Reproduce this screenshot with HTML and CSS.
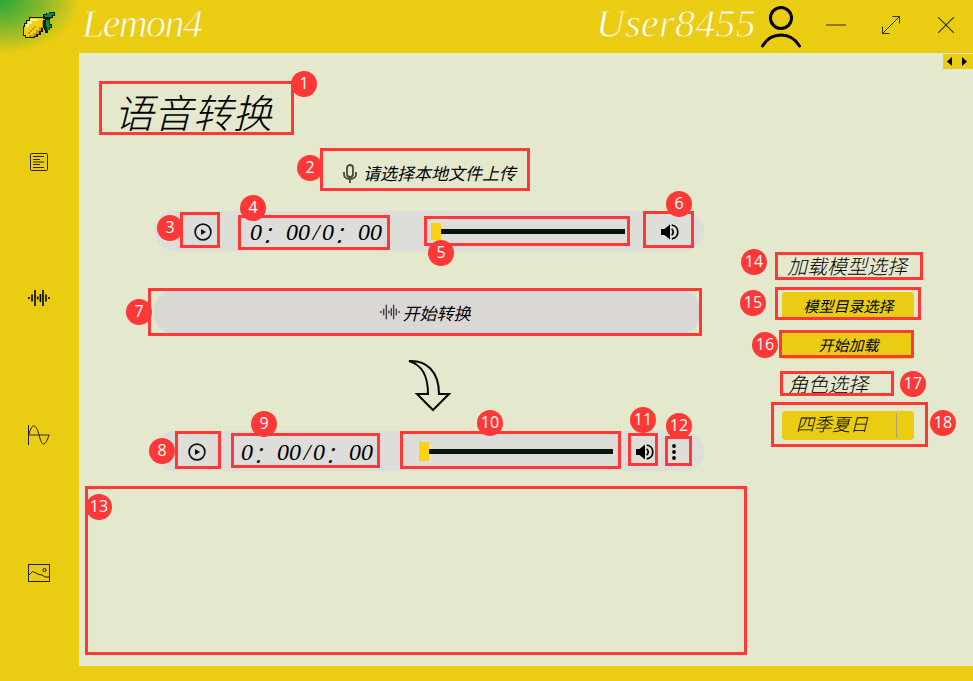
FILE: index.html
```html
<!DOCTYPE html>
<html lang="zh-CN">
<head>
<meta charset="utf-8">
<title>Lemon4</title>
<link rel="stylesheet" href="styles.css">
</head>
<body>
<svg class="defs" width="0" height="0">
  <defs>
    <symbol id="wave" viewBox="0 0 22 16"><path d="M1 7v2M4 4.500v7M7 0v16M9.700 6.500v3M12.400 4v8M15 0v16M18 4.500v7M21 7v2" fill="none" stroke="currentColor" stroke-width="1.600"/></symbol>
    <symbol id="play" viewBox="0 0 18 18"><circle cx="9" cy="9" r="7.900" fill="none" stroke="#111" stroke-width="1.700"/><path d="M7 6l5.200 3L7 12z" fill="#111"/></symbol>
    <symbol id="volume" viewBox="0 0 18 16"><path d="M0 5h3.500L9 .5v15L3.500 11H0z" fill="#000"/><path d="M10.700 4.700q3 3.300 0 6.600M10.800 1.200c8 1 8 12.600 0 13.600" fill="none" stroke="#000" stroke-width="1.700"/></symbol>
  </defs>
</svg>
<div class="app">
  <header class="topbar">
    <svg class="lemon" width="32" height="27" viewBox="0 0 32 27" shape-rendering="crispEdges">
      <path d="M6 5h14v3h2v8h-2v4h-2v3h-3v2h-3v1H2v-2H0V14h1v-3h2V8h3z" fill="#17180c"/>
      <path d="M7 6h13v10h-2v3h-2v3h-3v2h-2v1H3v-2H1v-8h1v-3h2V9h3z" fill="#f4cf18"/>
      <path d="M7 7h8v2H9v3H6v3H3v-3h2V9h2z" fill="#fff27a"/>
      <path d="M19 9h1v7h-2v3h-2v3h-3v2h-2v1H6v-2h4v-2h3v-3h3v-3h3zM5 20h2v-2h2v-2h2v-2h2v2h-2v2H9v2H7v2H5z" fill="#c79a0c"/>
      <path d="M5 12h1v1H5zM7 10h1v1H7zM10 8h2v1h-2z" fill="#fff"/>
      <path d="M20 2h3V1h3V0h6v4h-2v2h-2v1h-1v5h2v4h-2v2h-2v3h-3v-3h-1v-6h1V7h-2z" fill="#0a2410"/>
      <path d="M21 3h3V1h7v2h-2v2h-7zM23 8h3v5h2v2h-2v3h-2v-3h-1z" fill="#118a38"/>
    </svg>
    <div class="brand">Lemon4</div>
    <div class="user">User8455</div>
    <svg class="avatar" width="42" height="42" viewBox="0 0 42 42" fill="none" stroke="#000" stroke-linecap="round"><circle cx="21" cy="12" r="10.500" stroke-width="3"/><path d="M2.500 40Q9 29 21 29T39.500 40" stroke-width="3"/></svg>
    <svg class="win-min" width="20" height="20" viewBox="0 0 20 20"><path d="M0 10h20" stroke="#8c790b" stroke-width="2"/></svg>
    <svg class="win-max" width="18" height="18" viewBox="0 0 18 18" fill="none" stroke="#33310a"><path d="M.5 17.500l17-17M10.500.5h7v7M.5 10.500v7h7"/></svg>
    <svg width="16" height="16" viewBox="0 0 16 16" stroke="#33310a" stroke-width="1.100"><path d="M0 0l16 16M16 0L0 16"/></svg>
  </header>
  <nav class="sidebar">
    <svg width="18" height="18" viewBox="0 0 18 18" fill="none" stroke="#29270a"><rect x=".5" y=".5" width="17" height="17" rx="1"/><path d="M3 3.500h11M3 6.500h7M3 9h11M3 11.500h7M3 14.500h11"/></svg>
    <svg width="22" height="16"><use href="#wave"/></svg>
    <svg width="22" height="20" viewBox="0 0 22 20" fill="none" stroke="#222009"><path d="M.5 0v20"/><path d="M1 10h20.500" stroke="#74650a" stroke-width="1.500"/><path d="M1 9C4-2 8-2 11 10S17 22 21 10"/></svg>
    <svg width="22" height="18" viewBox="0 0 22 18" fill="none" stroke="#222009"><rect x=".5" y=".5" width="21" height="17"/><path d="M1 11l3.500-3.500L8 9l3 1.500 3 .5 3 2h4.500"/><circle cx="16.500" cy="6" r="1.600"/></svg>
  </nav>
  <main class="content">
    <section class="work">
      <h1>语音转换</h1>
      <div class="upload">
        <svg width="14" height="20" viewBox="0 0 14 20" fill="none" stroke="#454739" stroke-width="1.800"><rect x="4" y="1" width="6" height="12" rx="3"/><path d="M1 8v2.500c0 6 12 6 12 0V8M7 15v4"/></svg>
        <span>请选择本地文件上传</span>
      </div>
      <div class="player player-source">
        <svg width="18" height="18"><use href="#play"/></svg>
        <span class="time">0<em>：</em>00<i>/</i>0<em>：</em>00</span>
        <div class="slider"><b></b></div>
        <svg width="18" height="16"><use href="#volume"/></svg>
      </div>
      <div class="convert"><svg width="20" height="16"><use href="#wave"/></svg><span>开始转换</span></div>
      <svg class="arrow" width="44" height="54" viewBox="0 0 44 54"><path d="M2 2C19 1 32 12 32 35h10L26 51 10 35h11C21 16 15 6 2 2z" fill="none" stroke="#050805" stroke-width="2"/></svg>
      <div class="player player-result">
        <svg width="18" height="18"><use href="#play"/></svg>
        <span class="time">0<em>：</em>00<i>/</i>0<em>：</em>00</span>
        <div class="slider"><b></b></div>
        <svg width="18" height="16"><use href="#volume"/></svg>
        <svg class="more" width="4" height="16" viewBox="0 0 4 16"><circle cx="2" cy="2" r="1.900"/><circle cx="2" cy="8" r="1.900"/><circle cx="2" cy="14" r="1.900"/></svg>
      </div>
    </section>
    <aside class="model">
      <div class="pager"><svg width="20" height="9" viewBox="0 0 20 9"><path d="M5 0v9L0 4.500zM15 0v9l5-4.500z"/></svg></div>
      <div class="label">加载模型选择</div>
      <div class="button pick">模型目录选择</div>
      <div class="button load">开始加载</div>
      <div class="label role">角色选择</div>
      <div class="combo">四季夏日</div>
    </aside>
  </main>
</div>
<div class="marks">
  <div class="box b1"></div><div class="box b2"></div><div class="box b3"></div><div class="box b4"></div><div class="box b5"></div><div class="box b6"></div>
  <div class="box b7"></div><div class="box b8"></div><div class="box b9"></div><div class="box b10"></div><div class="box b11"></div><div class="box b12"></div>
  <div class="box b13"></div><div class="box b14"></div><div class="box b15"></div><div class="box b16"></div><div class="box b17"></div><div class="box b18"></div>
  <span class="num n1">1</span><span class="num n2">2</span><span class="num n3">3</span><span class="num n4">4</span><span class="num n5">5</span><span class="num n6">6</span>
  <span class="num n7">7</span><span class="num n8">8</span><span class="num n9">9</span><span class="num n10">10</span><span class="num n11">11</span><span class="num n12">12</span>
  <span class="num n13">13</span><span class="num n14">14</span><span class="num n15">15</span><span class="num n16">16</span><span class="num n17">17</span><span class="num n18">18</span>
</div>
</body>
</html>
```
FILE: styles.css
```css
* { box-sizing: border-box; }
body {
  margin: 0;
  width: 973px;
  height: 681px;
  position: relative;
  overflow: hidden;
  color: #000;
  font-family: "Liberation Serif", "Noto Sans CJK SC", serif;
  font-style: italic;
  font-weight: 300;
}
svg { display: block; flex: none; }
.defs { position: absolute; }
.app {
  height: 681px;
  display: grid;
  grid-template: 53px 1fr 15px / 79px 1fr;
  background: radial-gradient(ellipse 80px 54px at 0 0, #2ba63d, #7fb82c 50%, #eacc12) no-repeat 0 0 / 80px 54px, #eacc12;
}
.topbar {
  grid-column: 1 / 3;
  display: flex;
  align-items: center;
  padding: 0 19px 3px 23px;
}
.brand, .user {
  color: #fff;
  font-size: 40px;
  line-height: 46px;
  white-space: nowrap;
  margin-top: -3px;
  -webkit-text-stroke: 0.8px #eacc12;
}
.brand { width: 120px; margin-left: 27px; letter-spacing: -1.6px; }
.user { width: 160px; margin-left: 394px; letter-spacing: 0.3px; }
.avatar { margin: 3px 24px 0 4px; }
.win-min { margin-right: 36px; }
.win-max { margin-right: 38px; }
.sidebar {
  display: flex;
  flex-direction: column;
  align-items: center;
  justify-content: space-between;
  padding: 100px 1px 84px 0;
}
.content { display: flex; background: #e4e8cd; min-width: 0; }
.work { width: 680px; }
h1 {
  margin: 32px 0 0 35px;
  font-size: 39.5px;
  line-height: 60px;
  height: 63px;
  font-weight: 300;
}
.upload {
  display: flex;
  align-items: center;
  gap: 6px;
  height: 26px;
  margin: 13px 0 0 264px;
  padding-top: 2px;
  font-size: 17px;
  line-height: 24px;
}
.upload svg { margin-top: -3px; }
.player {
  display: flex;
  align-items: center;
  width: 549px;
  height: 40px;
  margin-left: 76px;
  border-radius: 20px;
  background: #dddeda;
}
.player > svg { margin-top: 1px; }
.time { font-size: 24px; line-height: 40px; width: 134px; white-space: nowrap; padding-top: 1px; }
.time i { display: inline-block; width: 12px; text-align: center; line-height: 1; }
.time em { display: inline-block; line-height: 1; transform: translate(-1px, 3px); }
.slider {
  height: 5px;
  background: #04150a;
  display: flex;
  align-items: center;
}
.slider b { width: 10px; height: 17px; background: #fbd20f; }
.player-source { margin-top: 24px; padding-left: 39px; }
.player-source .time { margin-left: 38px; }
.player-source .slider { width: 194px; margin: 0 36px 0 47px; }
.player-result { padding-left: 33px; }
.player-result .time { margin-left: 35px; }
.player-result .slider { width: 194px; margin: 0 23px 0 44px; }
.player-result .slider b { height: 19px; }
.more { margin-left: 18px; }
.convert {
  display: flex;
  align-items: center;
  justify-content: center;
  gap: 3px;
  width: 546px;
  height: 44px;
  margin: 39px 0 0 75px;
  padding-right: 4px;
  border-radius: 20px;
  background: #dbd7d5;
  font-size: 17px;
}
.convert svg { color: #444; }
.arrow { margin: 25px 0 0 328px; height: 54px; }
.arrow + .player-result { margin-top: 18px; }
.model { flex: 1; display: flex; flex-direction: column; align-items: flex-start; padding-left: 23px; }
.pager {
  align-self: flex-end;
  display: flex;
  justify-content: center;
  align-items: center;
  width: 30px;
  height: 15px;
  margin-top: 1px;
  padding-right: 2px;
  background: #eacc12;
}
.label { font-size: 20px; line-height: 26px; margin: 185px 0 0 5px; height: 26px; }
.label.role { margin: 13px 0 0 6px; }
.button, .combo { width: 132px; border-radius: 4px; background: #eacc12; }
.button { font-size: 15px; line-height: 30px; text-align: center; }
.pick { height: 27px; margin-top: 12px; padding-left: 1px; }
.load { height: 28px; margin-top: 12px; padding-left: 1px; }
.upload, .convert, .button { font-weight: 400; }
.combo {
  height: 29px;
  margin-top: 13px;
  padding-left: 14px;
  font-size: 18px;
  line-height: 28px;
  background: linear-gradient(#aaa383, #aaa383) no-repeat 114px 2px / 1px 25px, #eacc12;
}
.marks { position: absolute; inset: 0; font: normal 400 16px "Open Sans", "Noto Sans", sans-serif; }
.box { position: absolute; border: 3px solid #fd3837; }
.b1 { left: 99px; top: 81px; width: 195px; height: 54px; }
.b2 { left: 320px; top: 148px; width: 210px; height: 43px; }
.b3 { left: 180px; top: 212px; width: 40px; height: 36px; }
.b4 { left: 238px; top: 215px; width: 152px; height: 35px; }
.b5 { left: 424px; top: 216px; width: 206px; height: 30px; }
.b6 { left: 643px; top: 211px; width: 51px; height: 37px; }
.b7 { left: 148px; top: 288px; width: 554px; height: 48px; }
.b8 { left: 175px; top: 431px; width: 46px; height: 38px; }
.b9 { left: 231px; top: 433px; width: 149px; height: 35px; }
.b10 { left: 400px; top: 431px; width: 221px; height: 38px; }
.b11 { left: 628px; top: 433px; width: 30px; height: 33px; }
.b12 { left: 665px; top: 436px; width: 27px; height: 30px; }
.b13 { left: 85px; top: 486px; width: 662px; height: 169px; }
.b14 { left: 775px; top: 252px; width: 148px; height: 28px; }
.b15 { left: 775px; top: 287px; width: 146px; height: 33px; }
.b16 { left: 779px; top: 330px; width: 135px; height: 28px; }
.b17 { left: 780px; top: 371px; width: 114px; height: 25px; }
.b18 { left: 771px; top: 402px; width: 157px; height: 45px; }
.num {
  position: absolute;
  width: 26px;
  height: 26px;
  border-radius: 50%;
  background: #fd3837;
  color: #fff;
  text-align: center;
  line-height: 24px;
}
.n1 { left: 291px; top: 71px; }
.n2 { left: 297px; top: 155px; }
.n3 { left: 157px; top: 215px; }
.n4 { left: 240px; top: 195px; }
.n5 { left: 428px; top: 240px; }
.n6 { left: 666px; top: 191px; }
.n7 { left: 126px; top: 299px; }
.n8 { left: 149px; top: 438px; }
.n9 { left: 251px; top: 411px; }
.n10 { left: 477px; top: 410px; }
.n11 { left: 630px; top: 407px; }
.n12 { left: 666px; top: 413px; }
.n13 { left: 86px; top: 494px; }
.n14 { left: 741px; top: 249px; }
.n15 { left: 740px; top: 290px; }
.n16 { left: 752px; top: 332px; }
.n17 { left: 900px; top: 371px; }
.n18 { left: 930px; top: 410px; }
```
